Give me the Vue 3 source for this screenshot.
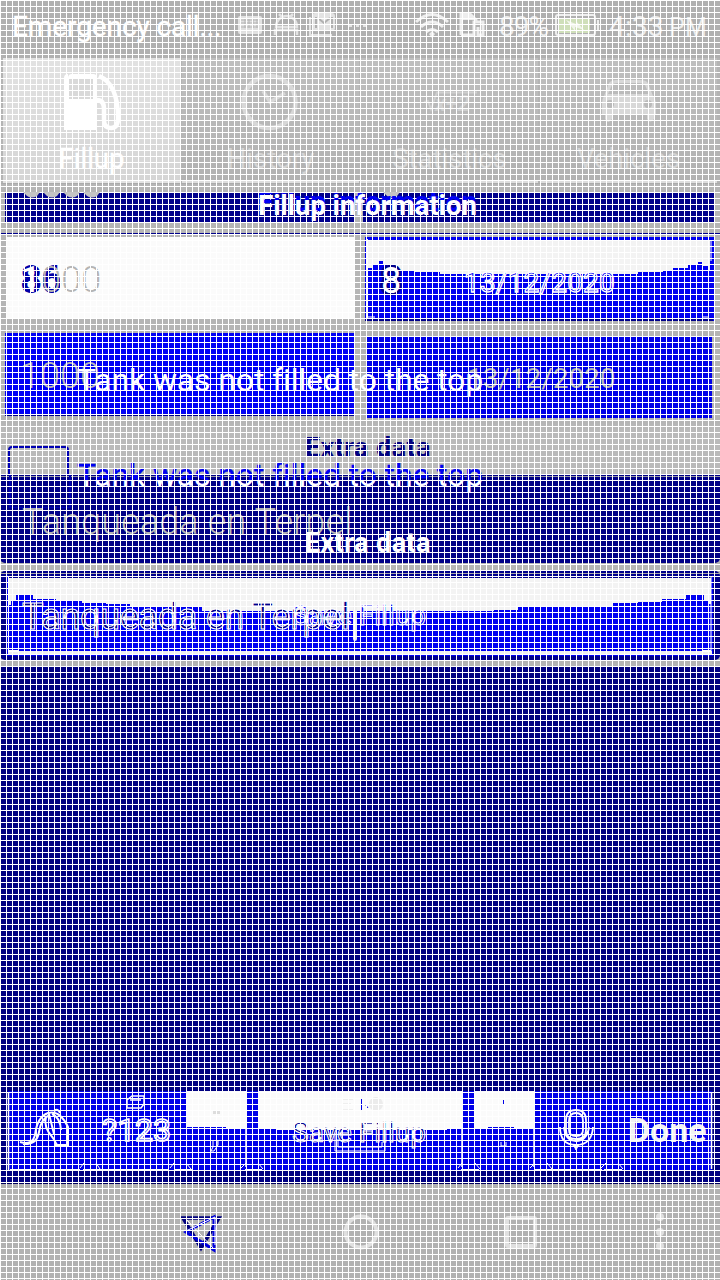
<script setup>
const tabs = [
  { name: 'Fillup', icon: 'fuel', active: true },
  { name: 'History', icon: 'clock' },
  { name: 'Statistics', icon: 'root' },
  { name: 'Vehicles', icon: 'car' }
]
</script>

<template>
  <div class="screen">
    <header class="status">
      <svg class="art" width="720" height="58" viewBox="0 0 720 58">
        <g fill="none" stroke="#e3e3e3" stroke-width="2">
          <rect x="239" y="17" width="22" height="16" rx="1" fill="#e0e0e0" />
          <path d="M241 20h18M241 23h18M241 27h18M245 18v10M249 18v10M253 18v10M257 18v10" stroke="#b5b5b5" stroke-width="1" />
          <path d="M276 27a10.5 11 0 0 1 21 0zM279 14l4 4M293 14l-4 4M275 35v-5h22v5" stroke-width="2.500" />
          <rect x="313" y="14" width="21" height="16" rx="2" fill="#e3e3e3" />
          <path d="M310 17v18h22" />
          <path d="M316 17v11M332 17v11M318 18l6 5 6-5" stroke="#b0b0b0" />
          <path d="M349 25.500h3M356 25.500h3M363 25.500h3" stroke-width="3" />
          <path d="M416 22q16-15 32 0M421 27q11-10 22 0M426 32q6-5 12 0" stroke-width="3" stroke="#eee" />
          <path d="M461 35V14h9l6 6v3M461 35h13v-13h9v13h-5v-8" stroke-width="3" stroke="#eee" />
          <rect x="556" y="15" width="39" height="20" rx="2" stroke="#eee" />
          <path d="M598 20v10" stroke="#eee" />
        </g>
        <path d="M432 31l3 3-3 4-3-4zM461 13h9l5 7h-14z" fill="#eee" />
        <path d="M559 18h31v15h-31z" fill="#cfdfba" />
        <path d="M566 20l10 4v-3l8 9-9-3v4z" fill="#f2f5ec" />
      </svg>
      <span class="t carrier">Emergency call...</span>
      <span class="t pct">89%</span>
      <span class="t time">4:33 <small>PM</small></span>
    </header>

    <nav class="tabs">
      <div v-for="t in tabs" :key="t.name" class="tab" :class="{ active: t.active }">
        <svg class="ticon" width="60" height="64" viewBox="0 0 60 64">
          <g v-if="t.icon === 'fuel'" fill="none" stroke="#fff">
            <path d="M6 7q0-4 4-4h21q4 0 4 4v52H2V7q0-4 4-4z" fill="#fff" stroke="none" />
            <path d="M7 8h24v20H7z" fill="#d9d9d9" stroke="none" />
            <path d="M35 29q7 0 7 9v11q0 8 7 8t7-10q0-34-19-42" stroke-width="4.500" />
          </g>
          <g v-else-if="t.icon === 'clock'" fill="none" stroke="#d8d8d8" stroke-width="4.500">
            <circle cx="28.500" cy="31" r="26" />
            <path d="M22 20l7 11 15-9" stroke-width="3.500" />
          </g>
          <g v-else-if="t.icon === 'root'" fill="none" stroke="#cfcfcf" stroke-width="2">
            <path d="M4 31l4-1 3 8 6-16.500h40" />
            <text x="15" y="40" class="formula">x+2</text>
          </g>
          <g v-else>
            <path fill="#d8d8d8" fill-rule="evenodd" d="M10 12q2-3 8-3h23q6 0 8 3l5 13q3 3 3 7v11h-2v5q-4 5-7 0v-5H13v5q-4 6-7 0v-5H3V32q0-4 2-7zM13 14q2-2 6-2h21q4 0 6 2l4 9H9zM7 33a4 4 0 1 0 8 0a4 4 0 1 0-8 0M45 33a4 4 0 1 0 8 0a4 4 0 1 0-8 0" />
          </g>
        </svg>
        <span class="tlabel">{{ t.name }}</span>
      </div>
    </nav>

    <section class="heading">
      <div class="band left"></div>
      <div class="band right"></div>
      <svg class="art scallops" width="720" height="53" viewBox="0 0 720 53">
        <g fill="#c4c4c4">
          <path d="M23 8h17l-3 4q-5 3-10 0zM43 8h17l-3 4q-5 3-10 0zM63 8h17l-3 4q-5 3-10 0zM83 8h17l-3 4q-5 3-10 0zM383 8h17l-3 4q-5 3-10 0z" />
        </g>
      </svg>
      <span class="t title under">Fillup information</span>
      <span class="t title">Fillup information</span>
      <div class="rule"></div>
    </section>

    <section class="row first">
      <div class="field white">
        <span class="t big old">86</span>
        <span class="t big new"><b>1</b>000</span>
      </div>
      <div class="field wave">
        <svg class="art" width="349" height="84" viewBox="0 0 349 84">
          <path fill="#f3f3f3" d="M3 3h342v30h-2v-4h-5v-4h-5v3h-10v3h-15v2h-10v2h-25v2H75v-2H50v-2H32v-2H22v-3h-4v-4h-5v3H8v4H3z" />
          <path d="M2.500 2v80M346 4v20M3 80h7M338 80h6" stroke="#fff" fill="none" />
          <path d="M0 83h348" stroke="#00008b" stroke-width="3" />
        </svg>
        <span class="t big eight">8</span>
        <span class="t date outline">13/12/2020</span>
      </div>
    </section>

    <section class="row second">
      <div class="field blue"><span class="t big thousand">1000</span></div>
      <div class="field blue2"><span class="t date">13/12/2020</span></div>
      <span class="t tank">Tank was not filled to the top</span>
    </section>

    <section class="extra">
      <span class="t extra-title">Extra data</span>
      <div class="check"></div>
    </section>

    <section class="note">
      <div class="checkghost"></div>
      <span class="t tank blue-text">Tank was not filled to the top</span>
      <span class="t tank pale">Tank was not filled to the top</span>
      <span class="t words">Tanqueada en Terpel</span>
      <span class="t extra-title light">Extra data</span>
    </section>

    <section class="input">
      <svg class="art" width="720" height="89" viewBox="0 0 720 89">
        <path d="M0 2.500h720" stroke="#aaa" />
        <path d="M7 4h706v81H7z" fill="#0000f0" />
        <path d="M8 5.500h704" stroke="#00008b" stroke-width="3" />
        <path fill="#f3f3f3" d="M8 7h703v26h-3v-4h-4v-5h-18v4h-24v3h-24v1h-25v4h-95v3h-24v1H202v-4h-72v-3h-24v-1H82v-2H56v-2H33v-4H16v5h-5v5H8z" />
        <path d="M8.500 6v78M711 6v78" stroke="#fff" />
        <path d="M8 82h704" stroke="#eee" stroke-width="4" />
        <path d="M8 80h10M702 80h9" stroke="#fff" stroke-width="2" />
      </svg>
      <span class="t save a">Save Fillup</span>
      <span class="t words dark">Tanqueada en Terpel</span>
      <div class="caret"></div>
    </section>

    <main class="blank"></main>

    <section class="keys">
      <svg class="art" width="720" height="80" viewBox="0 0 720 80">
        <path d="M8 0h704v80H8z" fill="#0000e8" />
        <path d="M186 0h60v37h-20v-1h-40zM258 0h204v38h-15v1H276v-1h-18zM474 0h60v37h-20v-1h-26v1h-14z" fill="#fbfbfb" />
        <g fill="none" stroke="#fff">
          <path d="M8.500 2v78M246 36v40M462 38v38M534 36v40M711.500 2v76" stroke-width="1.500" />
          <path d="M10 79h70M83 79h17M99 79h70M174 79h19M245 79h17M461 79h18M534 79h17M550 79h52M604 79h18" stroke-width="2" />
          <path d="M80 77l4-5M96 72l4 6M170 77l4-5M186 72l5 6M241 77l5-5M258 72l5 6M458 77l4-5M475 72l5 6M530 77l5-5M547 72l5 6M601 77l5-5M618 72l5 6" />
          <path d="M20 51q12 4 15-7 2-18 13-22 12-3 20 14v18H54M23 53q14 1 16-12 2-14 11-17M46 26q-3 10 7 21l4 7M49 23l5 20M52 23q8 3 9 16M54 20q4-3 6 2" stroke-width="2" />
          <path d="M127 9l5-4h12v8l-3 4h-14zM130 9h11" stroke-width="1.500" />
          <path d="M566 39V29q0-10 10-10t10 10v10q0 9-10 9t-10-9zM569 39V30q0-8 7-8t7 8v9q0 6-7 6t-7-6zM560 36q0 18 16 18t17-18M564 36q1 14 12 14t13-14" stroke-width="1.800" />
          <path d="M573 53l3 6 3-6" fill="#fff" />
          <path d="M335 42v18h50v-9M338 48v8h44v-5" />
          <path d="M213 50v6l-2 4h3l4-6v-5M217 50v5M501 51v4h5v-4" />
        </g>
        <path d="M213 20h7v3h-7z" fill="#ddd" />
        <path d="M503.500 9v4M361.500 8v12M365 13l3 4" stroke="#0000e8" />
        <path d="M343 8h10M343 13h8M343 19h10" stroke="#e2e2e2" />
        <circle cx="376" cy="13" r="7" fill="#ececec" />
      </svg>
      <span class="t save b">Save Fillup</span>
      <span class="t num">?123</span>
      <span class="t done">Done</span>
    </section>

    <footer class="bottom">
      <svg width="720" height="96" viewBox="0 0 720 96">
        <g fill="none" stroke="#e0e0e0" stroke-width="4">
          <circle cx="361" cy="48" r="15.500" />
          <rect x="507" y="34" width="28" height="28" rx="1" />
        </g>
        <g fill="#e0e0e0">
          <circle cx="660" cy="33" r="4" /><circle cx="660" cy="48" r="4" /><circle cx="660" cy="62" r="4" />
        </g>
        <path d="M183 34h36l-18 30z" fill="none" stroke="#00007d" stroke-width="3.500" />
        <path d="M214 33v33l-28-18z" fill="none" stroke="#0000e0" stroke-width="3" />
        <path d="M187 36l26 28M188 46l27-13v28" stroke="#fff" fill="none" />
      </svg>
    </footer>
    <div class="mesh"></div>
  </div>
</template>

<style>
html, body { margin: 0; background: #b2b2b2; }
</style>

<style scoped>
.screen { position: relative; width: 720px; height: 1280px; overflow: hidden; display: flex; flex-direction: column; font-family: Roboto, "Liberation Sans", sans-serif; background: #b4b4b4; color: #fff; }
.screen > * { flex: none; box-sizing: border-box; }
.mesh { position: absolute; inset: 0; pointer-events: none; background: repeating-linear-gradient(90deg, #fff 0 1px, transparent 1px 6px), repeating-linear-gradient(#fff 0 1px, transparent 1px 6px); }
.t { position: absolute; line-height: 1; white-space: pre; }
.art { position: absolute; left: 0; top: 0; }
.status { position: relative; height: 58px; background: #b0b0b0; }
.carrier { left: 12px; top: 13px; font-size: 28px; letter-spacing: -.1px; -webkit-text-stroke: .3px #fff; }
.pct { left: 499px; top: 13px; font-size: 28px; color: #ececec; letter-spacing: -1px; }
.time { left: 609px; top: 13px; font-size: 28px; color: #ececec; letter-spacing: .2px; }
.time small { font-size: 25px; margin-left: -2px; }
.tabs { display: grid; grid-template-columns: repeat(4, 177px); column-gap: 2px; padding-left: 3px; height: 126px; border-bottom: 1px solid #aaa; }
.tab { display: flex; flex-direction: column; align-items: center; background: linear-gradient(#bfbfbf, #b2b2b2); border-bottom: 3px solid #dedede; color: #d3d3d3; }
.tab.active { background: linear-gradient(#e2e2e2, #d5d5d5); color: #fff; border-color: #e2e2e2; }
.tab.active .tlabel { -webkit-text-stroke: .3px #fff; }
.ticon { margin-top: 13px; }
.tlabel { font-size: 27.500px; line-height: 30px; margin-top: 9px; }
.formula { font: italic bold 22px Roboto, sans-serif; fill: #cfcfcf; stroke: none; }
.heading { position: relative; height: 53px; overflow: hidden; background: #b5b5b5; }
.big { font-size: 36px; font-weight: 300; }
.scallops { z-index: 1; }
.band { position: absolute; top: 9px; height: 29px; background: #00008b; }
.band.left { left: 5px; width: 349px; }
.band.right { left: 363px; width: 351px; }
.title { left: 258px; top: 8px; font-size: 28px; font-weight: 700; letter-spacing: -.22px; z-index: 2; }
.title.under { top: 4px; color: #0000f5; clip-path: inset(5px 0 0 0); }
.rule { position: absolute; top: 49px; width: 720px; height: 1px; background: #00008b; }
.row { position: relative; display: grid; height: 96px; background: #b5b5b5; align-items: start; }
.first { grid-template-columns: 348px 349px; column-gap: 11px; padding-left: 6px; }
.second { grid-template-columns: 349px 345px; column-gap: 13px; padding-left: 5px; height: 97px; background: linear-gradient(#b3b3b3 84px, #b9b9b9); }
.field { position: relative; }
.white { height: 82px; background: #fbfbfb; }
.old { left: 15px; top: 25px; color: #0000a8; font-weight: 400; -webkit-text-stroke: 2px #0000a8; }
.new { left: 15px; top: 25px; color: #b4b4b4; }
.new b { color: #fff; font-weight: 400; }
.wave { height: 84px; background: #0000f0; }
.eight { left: 16px; top: 26px; color: #fff; font-weight: 400; -webkit-text-stroke: 5px #00008b; paint-order: stroke fill; }
.date { left: 100px; top: 31px; font-size: 28px; color: #b4b4b4; font-weight: 400; letter-spacing: -.05px; }
.outline { left: 99px; top: 32px; color: #0000f0; letter-spacing: .2px; -webkit-text-stroke: 1.300px #fff; }
.blue { height: 83px; background: #0000f5; border-bottom: 1px solid #00008b; box-sizing: border-box; }
.blue2 { height: 81px; margin-top: 4px; background: #0000e8; }
.blue2 .date { top: 28px; }
.thousand { left: 15px; top: 25px; color: #b8b8b8; }
.tank { left: 77px; top: 31px; font-size: 32px; letter-spacing: -.13px; }
.extra { position: relative; height: 45px; background: #bababa; overflow: hidden; }
.extra-title { left: 305px; top: 5px; font-size: 27px; font-weight: 700; letter-spacing: .4px; color: #000080; }
.check { position: absolute; left: 8px; top: 16px; width: 61px; height: 40px; box-sizing: border-box; border: 2px solid #0000b4; border-bottom: 0; border-radius: 4px 4px 0 0; }
.note { position: relative; height: 88px; background: #000086; border-radius: 0 0 5px 5px; }
.note::before { content: ''; position: absolute; top: 1px; width: 720px; height: 1px; background: #9b9ba8; }
.blue-text { top: -16px; color: #0000f0; -webkit-text-stroke: .3px #0000f0; }
.pale { top: -16px; color: #fff; clip-path: inset(21px -5px -5px -5px); }
.checkghost { position: absolute; left: 9px; top: 0; width: 58px; height: 32px; border: solid #0000b0; border-width: 0 2px 1px; }
.words { left: 22px; top: 29px; font-size: 36px; color: #b4b4b4; font-weight: 300; letter-spacing: .12px; }
.extra-title.light { top: 55px; color: #fff; }
.input { position: relative; height: 89px; margin-top: 8px; margin-bottom: 7px; background: #00008b; border-radius: 5px; }
.words.dark { color: #00008b; top: 28px; font-weight: 400; letter-spacing: -.3px; -webkit-text-stroke: 1px #fff; }
.save { font-size: 28px; left: 292px; color: #00008b; -webkit-text-stroke: 1px #fff; }
.save.a { top: 31px; color: #0000f0; }
.save.b { top: 28px; }
.caret { position: absolute; left: 353px; top: 19px; width: 4px; height: 51px; border-radius: 2px; background: #eee; }
.blank { height: 424px; background: #000080; }
.keys { position: relative; height: 93px; background: #000082; border-bottom: 1px solid #000060; }
.num { left: 102px; top: 23px; font-size: 32px; color: #0000e8; -webkit-text-stroke: 1.700px #fff; }
.done { left: 628px; top: 22px; font-size: 34px; font-weight: 700; color: #f2f2f2; }
.bottom { height: 96px; background: #b2b2b2; }
.bottom svg { display: block; }
</style>
